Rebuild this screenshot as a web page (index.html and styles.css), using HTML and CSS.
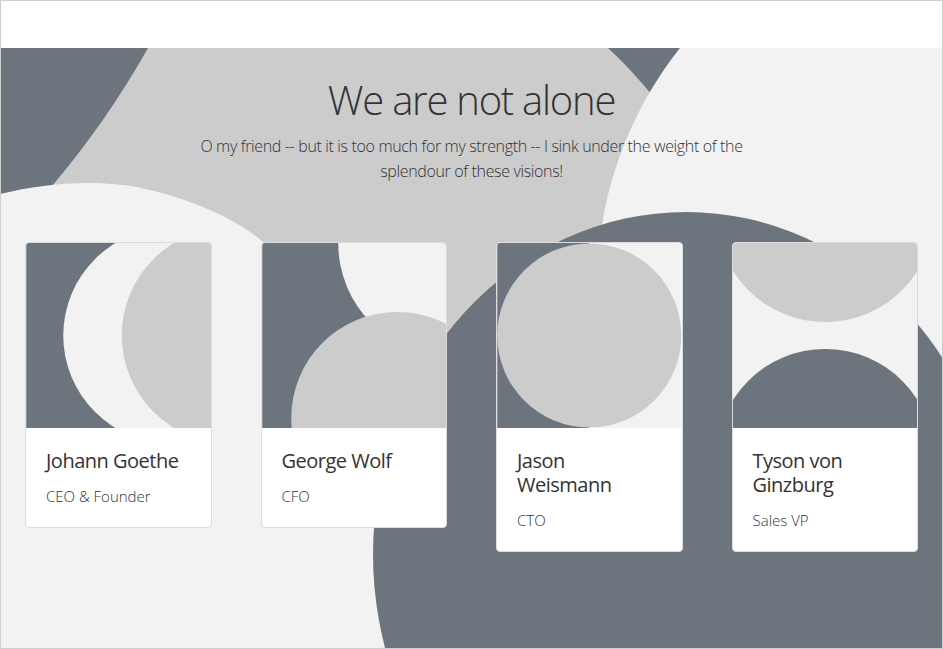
FILE: index.html
```html
<!DOCTYPE html>
<html lang="en">
<head>
<meta charset="utf-8">
<title>We are not alone</title>
<link rel="stylesheet" href="styles.css">
</head>
<body>
<div class="frame">
  <header class="topbar"></header>
  <section class="team">
    <svg class="team-bg" viewBox="1 48 941 600" preserveAspectRatio="none" aria-hidden="true">
      <rect x="0" y="40" width="960" height="620" fill="#cccccc"/>
      <path d="M0 48 L148 48 Q106.6 121.6 52 186 L20 240 L0 240 Z" fill="#6c757d"/>
      <path d="M608 48 Q632 70 656 100 L720 100 L720 48 Z" fill="#6c757d"/>
      <circle cx="980" cy="286" r="383" fill="#f2f2f2"/>
      <path d="M0 194 C40 184 100 177 150 190 C200 202 240 222 263 242 C330 300 380 380 420 460 L420 660 L0 660 Z" fill="#f2f2f2"/>
      <ellipse cx="686" cy="554" rx="313" ry="342" fill="#6c757d"/>
    </svg>
    <div class="team-inner">
      <h1 class="title">We are not alone</h1>
      <p class="lead">O my friend -- but it is too much for my strength -- I sink under the weight of the splendour of these visions!</p>
      <div class="cards">
        <article class="card">
          <svg class="card-img" viewBox="0 0 184 185" aria-hidden="true">
            <rect width="184" height="185" fill="#6c757d"/>
            <circle cx="145" cy="92.5" r="108" fill="#f2f2f2"/>
            <circle cx="203.5" cy="92.5" r="108" fill="#cccccc"/>
          </svg>
          <div class="card-body">
            <h5 class="card-title">Johann Goethe</h5>
            <p class="card-text">CEO &amp; Founder</p>
          </div>
        </article>
        <article class="card">
          <svg class="card-img" viewBox="0 0 184 185" aria-hidden="true">
            <rect width="184" height="185" fill="#6c757d"/>
            <circle cx="190" cy="0" r="114" fill="#f2f2f2"/>
            <circle cx="135" cy="175" r="106" fill="#cccccc"/>
          </svg>
          <div class="card-body">
            <h5 class="card-title">George Wolf</h5>
            <p class="card-text">CFO</p>
          </div>
        </article>
        <article class="card">
          <svg class="card-img" viewBox="0 0 184 185" aria-hidden="true">
            <rect width="92" height="185" fill="#6c757d"/>
            <rect x="92" width="92" height="185" fill="#f2f2f2"/>
            <circle cx="92" cy="92.5" r="92" fill="#cccccc"/>
          </svg>
          <div class="card-body">
            <h5 class="card-title">Jason Weismann</h5>
            <p class="card-text">CTO</p>
          </div>
        </article>
        <article class="card">
          <svg class="card-img" viewBox="0 0 184 185" aria-hidden="true">
            <rect width="184" height="185" fill="#f2f2f2"/>
            <circle cx="92" cy="-30" r="109" fill="#cccccc"/>
            <circle cx="92" cy="215" r="109" fill="#6c757d"/>
          </svg>
          <div class="card-body">
            <h5 class="card-title">Tyson von Ginzburg</h5>
            <p class="card-text">Sales VP</p>
          </div>
        </article>
      </div>
    </div>
  </section>
</div>
</body>
</html>
```

FILE: styles.css
```css
* { box-sizing: border-box; }

html, body {
  margin: 0;
  padding: 0;
  background: #ffffff;
}

body {
  font-family: "Open Sans", "Noto Sans", "Liberation Sans", sans-serif;
  color: #333333;
}

.frame {
  width: 943px;
  height: 649px;
  border: 1px solid #cfcfcf;
  overflow: hidden;
  background: #ffffff;
}

.topbar {
  height: 47px;
  background: #ffffff;
}

.team {
  position: relative;
  height: 600px;
  overflow: hidden;
}

.team-bg {
  position: absolute;
  left: 0;
  top: 0;
  width: 941px;
  height: 600px;
  display: block;
}

.team-inner {
  position: relative;
  padding: 28px 24px 0;
}

.title {
  margin: 0;
  text-align: center;
  font-size: 40px;
  font-weight: 300;
  line-height: 48px;
  letter-spacing: -1.25px;
  color: #333333;
}

.lead {
  margin: 10px auto 0;
  max-width: 580px;
  text-align: center;
  font-size: 16px;
  font-weight: 300;
  line-height: 24.5px;
  letter-spacing: -0.35px;
  color: #333333;
}

.cards {
  margin-top: 59px;
  display: grid;
  grid-template-columns: repeat(4, 1fr);
  gap: 49px;
  align-items: start;
}

.card {
  background: #ffffff;
  border: 1px solid #dcdcdc;
  border-radius: 4px;
  overflow: hidden;
}

.card-img {
  display: block;
  width: 100%;
  height: 185px;
}

.card-body {
  padding: 21px 20px 19px;
}

.card-title {
  margin: 0 0 12px;
  font-size: 20px;
  font-weight: 400;
  line-height: 24px;
  letter-spacing: -0.5px;
  color: #333333;
}

.card-text {
  margin: 0;
  font-size: 15px;
  font-weight: 300;
  line-height: 22.5px;
  color: #333333;
}
```
